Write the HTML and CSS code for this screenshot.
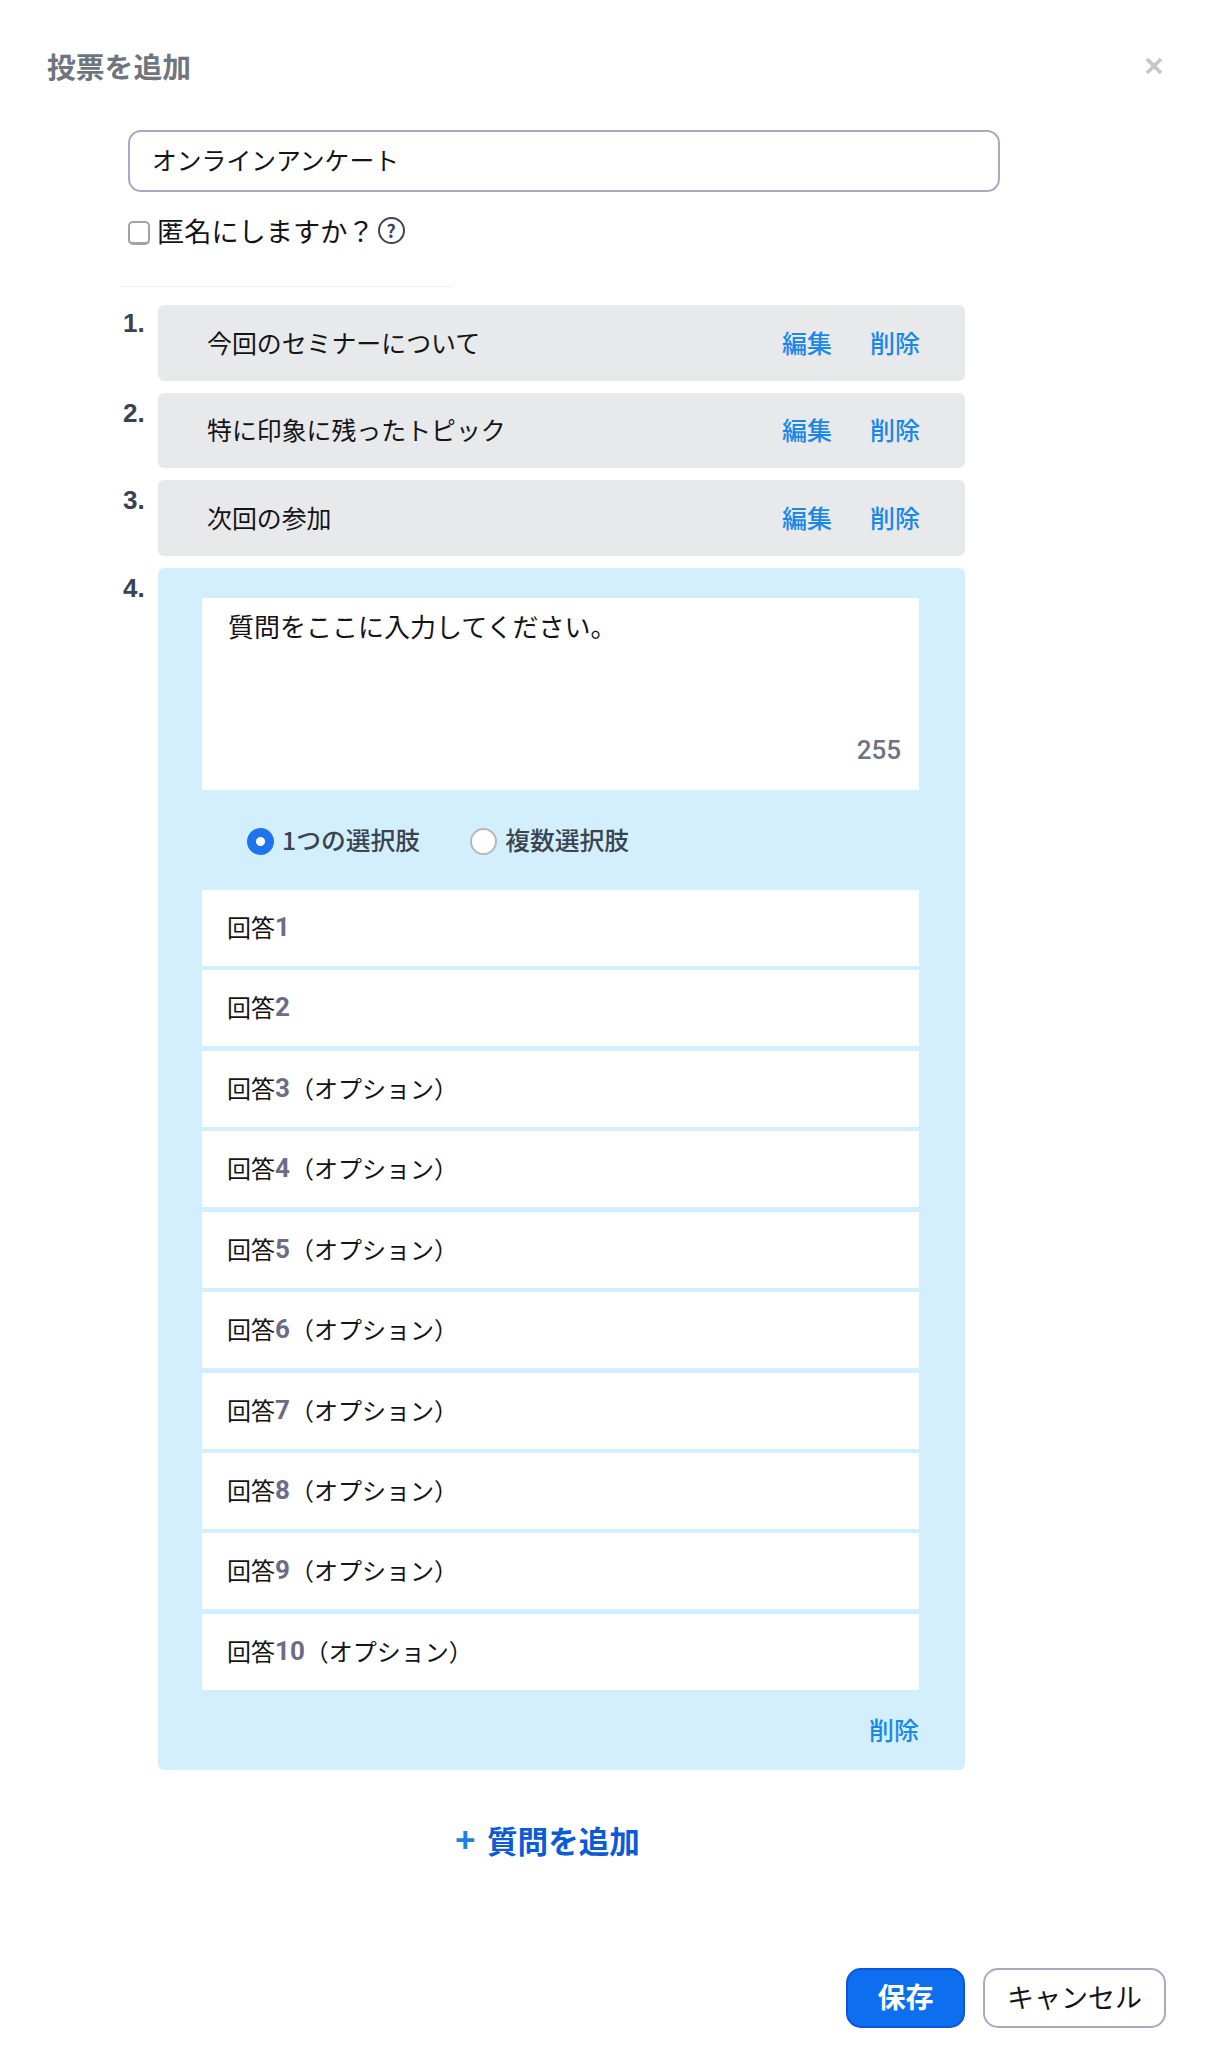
FILE: index.html
```html
<!DOCTYPE html>
<html lang="ja">
<head>
<meta charset="utf-8">
<title>投票を追加</title>
<link rel="stylesheet" href="styles.css">
</head>
<body>
<div class="dialog">
  <header class="head">
    <h1 class="head-title">投票を追加</h1>
    <button class="close" aria-label="閉じる">
      <svg width="20" height="20" viewBox="0 0 20 20"><path d="M3 3 L17 17 M17 3 L3 17" stroke="#c4c6cc" stroke-width="3.8" fill="none"/></svg>
    </button>
  </header>

  <input class="poll-name" type="text" value="オンラインアンケート">

  <label class="anon">
    <input class="anon-check" type="checkbox">
    <span class="anon-text">匿名にしますか？</span>
    <span class="help">?</span>
  </label>

  <div class="divider"></div>

  <ol class="questions">
    <li class="q">
      <span class="q-num">1.</span>
      <div class="q-row"><span class="q-text">今回のセミナーについて</span><a class="link">編集</a><a class="link">削除</a></div>
    </li>
    <li class="q">
      <span class="q-num q-num-low">2.</span>
      <div class="q-row"><span class="q-text">特に印象に残ったトピック</span><a class="link">編集</a><a class="link">削除</a></div>
    </li>
    <li class="q">
      <span class="q-num q-num-low">3.</span>
      <div class="q-row"><span class="q-text">次回の参加</span><a class="link">編集</a><a class="link">削除</a></div>
    </li>
    <li class="q">
      <span class="q-num q-num-low">4.</span>
      <div class="q-card">
        <div class="q-input">
          <div class="q-placeholder">質問をここに入力してください。</div>
          <div class="q-count">255</div>
        </div>
        <div class="choice-type">
          <label class="choice"><input class="radio" type="radio" name="t" checked><span class="choice-text">1つの選択肢</span></label>
          <label class="choice"><input class="radio" type="radio" name="t"><span class="choice-text">複数選択肢</span></label>
        </div>
        <div class="answers">
          <div class="answer">回答<b class="n">1</b></div>
          <div class="answer">回答<b class="n">2</b></div>
          <div class="answer">回答<b class="n">3</b>（オプション）</div>
          <div class="answer">回答<b class="n">4</b>（オプション）</div>
          <div class="answer">回答<b class="n">5</b>（オプション）</div>
          <div class="answer">回答<b class="n">6</b>（オプション）</div>
          <div class="answer">回答<b class="n">7</b>（オプション）</div>
          <div class="answer">回答<b class="n">8</b>（オプション）</div>
          <div class="answer">回答<b class="n">9</b>（オプション）</div>
          <div class="answer">回答<b class="n">10</b>（オプション）</div>
        </div>
        <div class="card-foot"><a class="link">削除</a></div>
      </div>
    </li>
  </ol>

  <a class="add"><span class="add-plus">+</span><span>質問を追加</span></a>

  <footer class="foot">
    <button class="btn btn-primary">保存</button>
    <button class="btn btn-ghost">キャンセル</button>
  </footer>
</div>
</body>
</html>
```
FILE: styles.css
```css
* { box-sizing: border-box; }
html, body { margin: 0; padding: 0; background: #fff; }
body {
  font-family: "Noto Sans CJK JP", "Noto Sans", sans-serif;
  color: #141418;
}
.dialog { width: 1216px; height: 2048px; overflow: hidden; }

.head {
  display: flex;
  justify-content: space-between;
  align-items: center;
  height: 130px;
  padding: 46px 52px 44px 47px;
}
.head-title {
  margin: 0;
  font-size: 28.8px;
  line-height: 40px;
  font-weight: 700;
  color: #70757d;
}
.close { border: 0; background: none; padding: 0; width: 20px; height: 20px; }
.close svg { display: block; }

.poll-name {
  display: block;
  width: 872px;
  height: 62px;
  margin-left: 128px;
  padding: 0 22px 4px;
  border: 2px solid #a9a9c4;
  border-radius: 13px;
  font: inherit;
  font-size: 24.8px;
  color: #141418;
  background: #fff;
  outline: none;
}

.anon {
  display: flex;
  align-items: center;
  height: 30px;
  margin: 23px 0 0 128px;
}
.anon-check {
  appearance: none;
  width: 22px;
  height: 24px;
  margin: 5px 7px 0 0;
  border: 2px solid #a2a2a8;
  border-bottom-width: 3px;
  border-radius: 5px;
  background: #fff;
}
.anon-text { font-size: 27.2px; line-height: 30px; }
.help {
  display: flex;
  align-items: center;
  justify-content: center;
  width: 27px;
  height: 27px;
  margin-left: 3px;
  border: 2.5px solid #3e4356;
  border-radius: 50%;
  font-size: 18px;
  font-weight: 700;
  line-height: 1;
  color: #3e4356;
}

.divider {
  width: 333px;
  height: 1px;
  margin: 41px 0 0 120px;
  background: #f1f1f3;
}

.questions {
  list-style: none;
  margin: 18px 0 0;
  padding: 0;
}
.q {
  display: flex;
  margin-bottom: 12px;
}
.q-num {
  width: 157.5px;
  padding: 2px 0 0 123px;
  font-family: "Liberation Sans", sans-serif;
  font-size: 26px;
  line-height: 32px;
  font-weight: 700;
  color: #3c4150;
}
.q-num-low { padding-top: 4px; }
.q-row {
  display: flex;
  align-items: center;
  gap: 38px;
  width: 807.5px;
  height: 75.67px;
  padding: 0 45px 2px 49.5px;
  border-radius: 6px;
  background: #e8e9eb;
}
.q-text { flex: 1; font-size: 24.9px; line-height: 32px; }
.link { font-size: 25px; line-height: 32px; font-weight: 500; color: #1a88e6; }

.q-card {
  width: 807.5px;
  height: 1202px;
  padding: 30px 46px 0 44.5px;
  border-radius: 6px;
  background: #d3effe;
}
.q-input {
  display: flex;
  flex-direction: column;
  justify-content: space-between;
  height: 192px;
  padding: 10px 18px 22px 26px;
  background: #fff;
}
.q-placeholder { font-size: 26px; line-height: 36px; }
.q-count {
  align-self: flex-end;
  font-family: "Roboto", sans-serif;
  font-size: 26px;
  line-height: 36px;
  font-weight: 500;
  color: #6f7280;
}
.choice-type {
  display: flex;
  align-items: center;
  gap: 50px;
  height: 100px;
  padding-left: 45px;
}
.choice {
  display: flex;
  align-items: center;
  gap: 8px;
  font-size: 24.8px;
  line-height: 32px;
  font-weight: 500;
  color: #3a4350;
}
.choice-text { padding-bottom: 2px; }
.radio {
  appearance: none;
  flex: none;
  width: 27px;
  height: 27px;
  margin: 3px 0 0;
  border: 2px solid #b4b6ba;
  border-radius: 50%;
  background: #fff;
}
.radio:checked {
  border-color: #1f74ee;
  background: radial-gradient(circle, #fff 0 4px, #1f74ee 5px);
}

.answers { display: flex; flex-direction: column; gap: 4.44px; }
.answer {
  display: flex;
  align-items: center;
  height: 76px;
  padding: 0 0 2px 25px;
  font-size: 24px;
  line-height: 32px;
  background: #fff;
}
.n {
  font-family: "Roboto", sans-serif;
  font-size: 26px;
  font-weight: 700;
  color: #6b6d84;
}
.card-foot {
  display: flex;
  justify-content: flex-end;
  align-items: center;
  height: 80px;
  padding-bottom: 2px;
}

.add {
  display: flex;
  align-items: center;
  gap: 12px;
  height: 40px;
  margin: 50px 0 0 455px;
  font-size: 30.6px;
  line-height: 40px;
  font-weight: 700;
  color: #0b5ad6;
}
.add-plus { width: 20px; font-family: "Liberation Sans", sans-serif; font-size: 35px; text-align: center; color: #1d7fe4; }

.foot {
  display: flex;
  justify-content: flex-end;
  gap: 18px;
  margin-top: 108px;
  padding-right: 50px;
}
.btn {
  height: 60px;
  padding: 0 0 3px;
  border-radius: 15px;
  font-family: inherit;
}
.btn-primary {
  width: 119px;
  border: 2px solid #0a55dc;
  font-size: 28px;
  font-weight: 700;
  color: #fff;
  background: #0d6ef0;
}
.btn-ghost {
  width: 183px;
  border: 2px solid #a9a9c4;
  font-size: 27px;
  color: #141418;
  background: #fff;
}
```
